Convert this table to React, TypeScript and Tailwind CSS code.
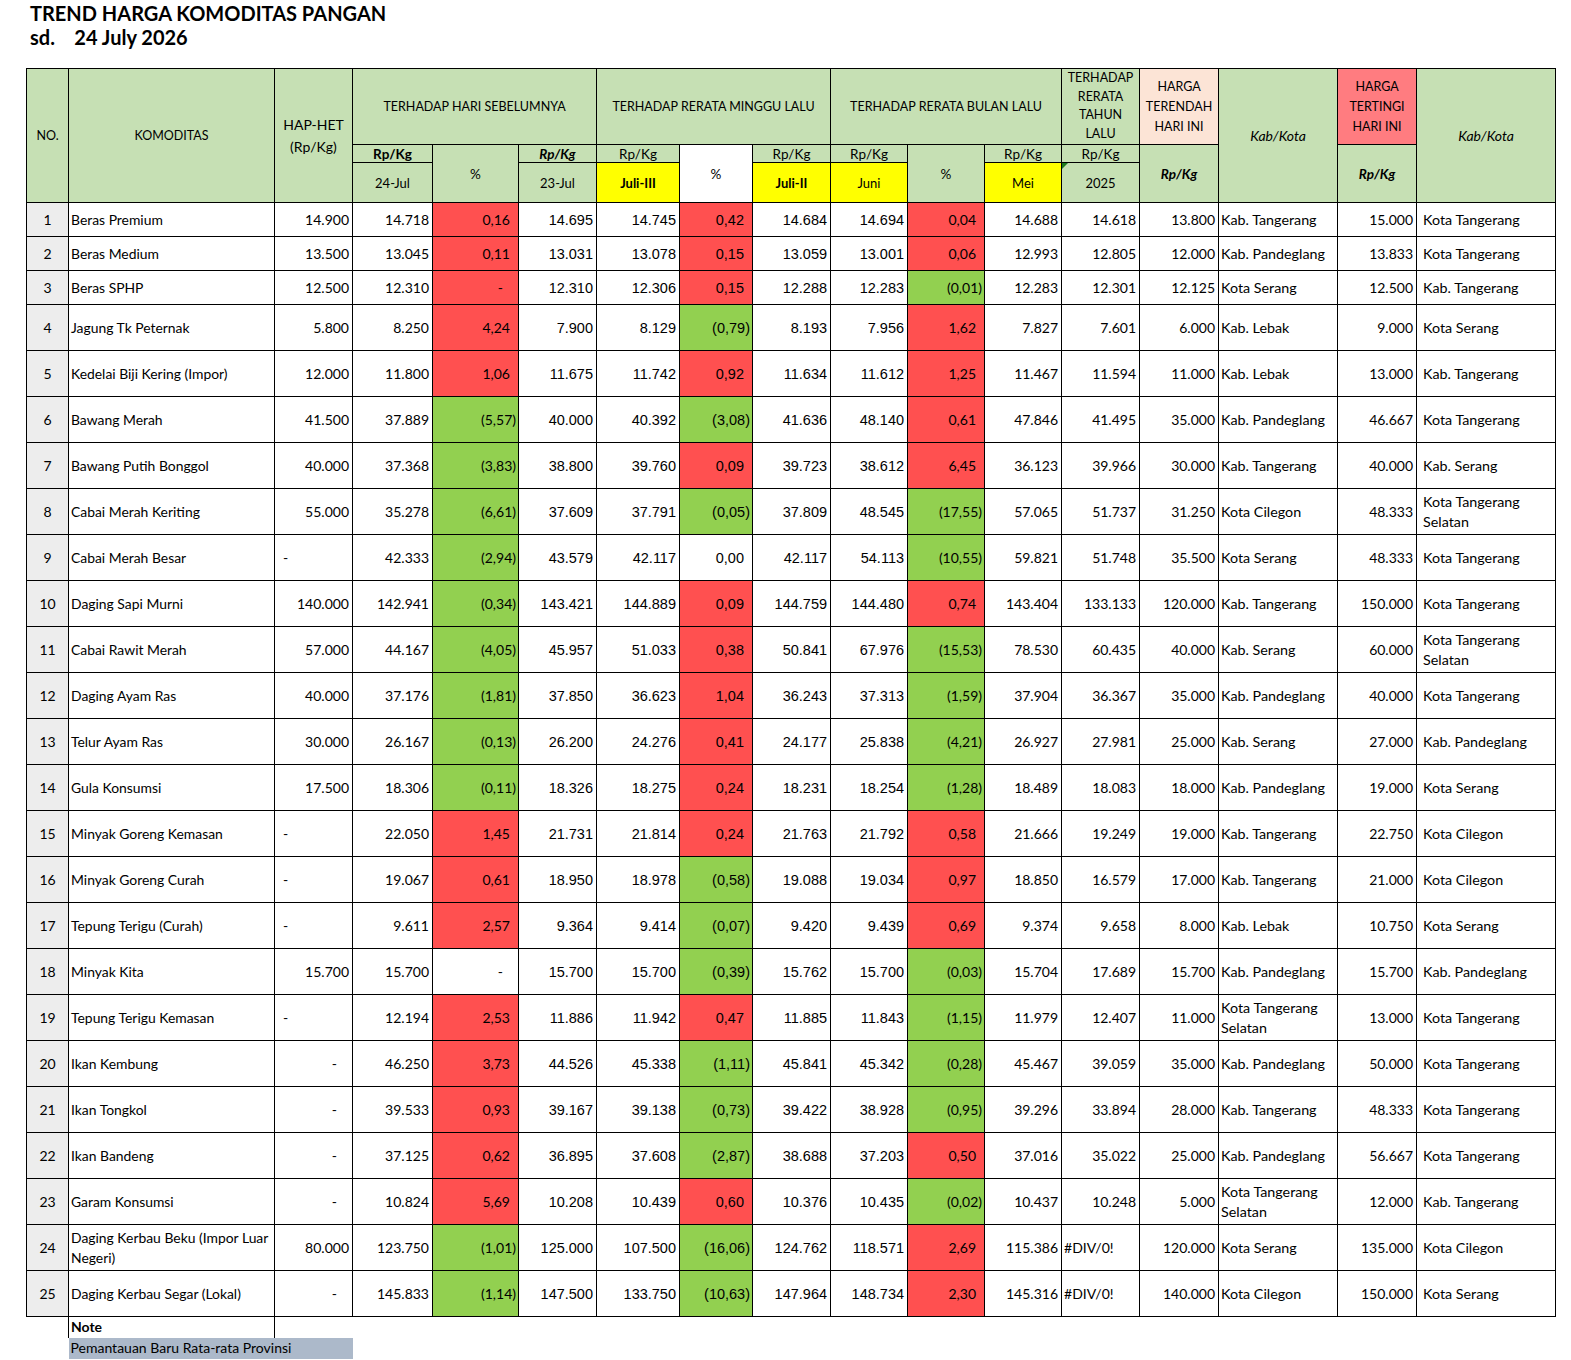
import React from 'react';

type Tone = 'r' | 'g' | 'w';

interface Row {
  no: number;
  name: string;
  hap: string;
  hapLeft?: boolean;
  d24: string;
  p1: string;
  t1: Tone;
  d23: string;
  j3: string;
  p2: string;
  t2: Tone;
  j2: string;
  juni: string;
  p3: string;
  t3: Tone;
  mei: string;
  y25: string;
  low: string;
  lowLoc: string;
  high: string;
  highLoc: string;
}

// one line per commodity: no|name|hap|24jul|%|23jul|juli3|%|juli2|juni|%|mei|2025|low|loc|high|loc
const raw = `1|Beras Premium|14.900|14.718|0,16 r|14.695|14.745|0,42 r|14.684|14.694|0,04 r|14.688|14.618|13.800|Kab. Tangerang|15.000|Kota Tangerang
2|Beras Medium|13.500|13.045|0,11 r|13.031|13.078|0,15 r|13.059|13.001|0,06 r|12.993|12.805|12.000|Kab. Pandeglang|13.833|Kota Tangerang
3|Beras SPHP|12.500|12.310|- r|12.310|12.306|0,15 r|12.288|12.283|(0,01) g|12.283|12.301|12.125|Kota Serang|12.500|Kab. Tangerang
4|Jagung Tk Peternak|5.800|8.250|4,24 r|7.900|8.129|(0,79) g|8.193|7.956|1,62 r|7.827|7.601|6.000|Kab. Lebak|9.000|Kota Serang
5|Kedelai Biji Kering (Impor)|12.000|11.800|1,06 r|11.675|11.742|0,92 r|11.634|11.612|1,25 r|11.467|11.594|11.000|Kab. Lebak|13.000|Kab. Tangerang
6|Bawang Merah|41.500|37.889|(5,57) g|40.000|40.392|(3,08) g|41.636|48.140|0,61 r|47.846|41.495|35.000|Kab. Pandeglang|46.667|Kota Tangerang
7|Bawang Putih Bonggol|40.000|37.368|(3,83) g|38.800|39.760|0,09 r|39.723|38.612|6,45 r|36.123|39.966|30.000|Kab. Tangerang|40.000|Kab. Serang
8|Cabai Merah Keriting|55.000|35.278|(6,61) g|37.609|37.791|(0,05) g|37.809|48.545|(17,55) g|57.065|51.737|31.250|Kota Cilegon|48.333|Kota Tangerang Selatan
9|Cabai Merah Besar|-L|42.333|(2,94) g|43.579|42.117|0,00 w|42.117|54.113|(10,55) g|59.821|51.748|35.500|Kota Serang|48.333|Kota Tangerang
10|Daging Sapi Murni|140.000|142.941|(0,34) g|143.421|144.889|0,09 r|144.759|144.480|0,74 r|143.404|133.133|120.000|Kab. Tangerang|150.000|Kota Tangerang
11|Cabai Rawit Merah|57.000|44.167|(4,05) g|45.957|51.033|0,38 r|50.841|67.976|(15,53) g|78.530|60.435|40.000|Kab. Serang|60.000|Kota Tangerang Selatan
12|Daging Ayam Ras|40.000|37.176|(1,81) g|37.850|36.623|1,04 r|36.243|37.313|(1,59) g|37.904|36.367|35.000|Kab. Pandeglang|40.000|Kota Tangerang
13|Telur Ayam Ras|30.000|26.167|(0,13) g|26.200|24.276|0,41 r|24.177|25.838|(4,21) g|26.927|27.981|25.000|Kab. Serang|27.000|Kab. Pandeglang
14|Gula Konsumsi|17.500|18.306|(0,11) g|18.326|18.275|0,24 r|18.231|18.254|(1,28) g|18.489|18.083|18.000|Kab. Pandeglang|19.000|Kota Serang
15|Minyak Goreng Kemasan|-L|22.050|1,45 r|21.731|21.814|0,24 r|21.763|21.792|0,58 r|21.666|19.249|19.000|Kab. Tangerang|22.750|Kota Cilegon
16|Minyak Goreng Curah|-L|19.067|0,61 r|18.950|18.978|(0,58) g|19.088|19.034|0,97 r|18.850|16.579|17.000|Kab. Tangerang|21.000|Kota Cilegon
17|Tepung Terigu (Curah)|-L|9.611|2,57 r|9.364|9.414|(0,07) g|9.420|9.439|0,69 r|9.374|9.658|8.000|Kab. Lebak|10.750|Kota Serang
18|Minyak Kita|15.700|15.700|- w|15.700|15.700|(0,39) g|15.762|15.700|(0,03) g|15.704|17.689|15.700|Kab. Pandeglang|15.700|Kab. Pandeglang
19|Tepung Terigu Kemasan|-L|12.194|2,53 r|11.886|11.942|0,47 r|11.885|11.843|(1,15) g|11.979|12.407|11.000|Kota Tangerang Selatan|13.000|Kota Tangerang
20|Ikan Kembung|-|46.250|3,73 r|44.526|45.338|(1,11) g|45.841|45.342|(0,28) g|45.467|39.059|35.000|Kab. Pandeglang|50.000|Kota Tangerang
21|Ikan Tongkol|-|39.533|0,93 r|39.167|39.138|(0,73) g|39.422|38.928|(0,95) g|39.296|33.894|28.000|Kab. Tangerang|48.333|Kota Tangerang
22|Ikan Bandeng|-|37.125|0,62 r|36.895|37.608|(2,87) g|38.688|37.203|0,50 r|37.016|35.022|25.000|Kab. Pandeglang|56.667|Kota Tangerang
23|Garam Konsumsi|-|10.824|5,69 r|10.208|10.439|0,60 r|10.376|10.435|(0,02) g|10.437|10.248|5.000|Kota Tangerang Selatan|12.000|Kab. Tangerang
24|Daging Kerbau Beku (Impor Luar Negeri)|80.000|123.750|(1,01) g|125.000|107.500|(16,06) g|124.762|118.571|2,69 r|115.386|#DIV/0!|120.000|Kota Serang|135.000|Kota Cilegon
25|Daging Kerbau Segar (Lokal)|-|145.833|(1,14) g|147.500|133.750|(10,63) g|147.964|148.734|2,30 r|145.316|#DIV/0!|140.000|Kota Cilegon|150.000|Kota Serang`;

const split = (s: string): [string, Tone] => {
  const [v, t] = s.split(' ');
  return [v, t as Tone];
};

const rows: Row[] = raw.split('\n').map((line) => {
  const c = line.split('|');
  const [p1, t1] = split(c[4]);
  const [p2, t2] = split(c[7]);
  const [p3, t3] = split(c[10]);
  return {
    no: Number(c[0]),
    name: c[1],
    hap: c[2] === '-L' ? '-' : c[2],
    hapLeft: c[2] === '-L',
    d24: c[3],
    p1,
    t1,
    d23: c[5],
    j3: c[6],
    p2,
    t2,
    j2: c[8],
    juni: c[9],
    p3,
    t3,
    mei: c[11],
    y25: c[12],
    low: c[13],
    lowLoc: c[14],
    high: c[15],
    highLoc: c[16],
  };
});

const widths = [42, 206, 78, 80, 86, 78, 83, 73, 78, 77, 77, 77, 78, 79, 119, 79, 139];

const cell = 'border border-black';
const hdr = 'border border-black bg-[#c6e0b4] text-center align-middle';
const calibri = "font-['Lato','Open_Sans',sans-serif]";
const arial = "font-['Liberation_Sans',Arial,sans-serif] text-[14.5px]";

function Pct({ v, tone, arialFont }: { v: string; tone: Tone; arialFont?: boolean }) {
  const bg =
    tone === 'r' ? 'bg-[#ff5050]' : tone === 'g' ? 'bg-[#92d050]' : 'bg-white';
  const pad = v === '-' ? 'pr-[15px]' : v.startsWith('(') ? 'pr-[2px]' : 'pr-[8px]';
  return (
    <td className={`${cell} ${bg} ${pad} text-right ${arialFont ? arial : ''}`}>{v}</td>
  );
}

function Num({ v, arialFont }: { v: string; arialFont?: boolean }) {
  return (
    <td className={`${cell} pr-[3px] text-right ${arialFont ? arial : ''}`}>{v}</td>
  );
}

export default function App() {
  return (
    <div className={`min-h-[1360px] bg-white text-black ${calibri}`}>
      <div className="pl-[30px] pt-[1px] text-[20px] font-bold leading-[24px]">
        <div>TREND HARGA KOMODITAS PANGAN</div>
        <div>sd.&nbsp;&nbsp;&nbsp; 24 July 2026</div>
      </div>

      <table className="ml-[26px] mt-[19px] w-[1529px] table-fixed border-collapse text-[14px] leading-[20px]">
        <colgroup>
          {widths.map((w, i) => (
            <col key={i} style={{ width: w }} />
          ))}
        </colgroup>
        <thead className="text-[12.5px]">
          <tr className="h-[76px]">
            <th rowSpan={3} className={`${hdr} font-normal`}>
              NO.
            </th>
            <th rowSpan={3} className={`${hdr} font-normal`}>
              KOMODITAS
            </th>
            <th rowSpan={3} className={`${hdr} font-normal text-[14px] leading-[22px]`}>
              HAP-HET
              <br />
              (Rp/Kg)
            </th>
            <th colSpan={3} className={`${hdr} font-normal`}>
              TERHADAP HARI SEBELUMNYA
            </th>
            <th colSpan={3} className={`${hdr} font-normal`}>
              TERHADAP RERATA MINGGU LALU
            </th>
            <th colSpan={3} className={`${hdr} font-normal`}>
              TERHADAP RERATA BULAN LALU
            </th>
            <th className={`${hdr} font-normal leading-[18.5px] align-top pt-0`}>
              TERHADAP
              <br />
              RERATA
              <br />
              TAHUN
              <br />
              LALU
            </th>
            <th className={`${hdr} !bg-[#fce4d6] font-normal leading-[20px]`}>
              HARGA
              <br />
              TERENDAH
              <br />
              HARI INI
            </th>
            <th rowSpan={3} className={`${hdr} font-normal italic text-[14px]`}>
              Kab/Kota
            </th>
            <th className={`${hdr} !bg-[#ff7c80] font-normal leading-[20px]`}>
              HARGA
              <br />
              TERTINGI
              <br />
              HARI INI
            </th>
            <th rowSpan={3} className={`${hdr} font-normal italic text-[14px]`}>
              Kab/Kota
            </th>
          </tr>
          <tr className="h-[18px] text-[13.5px] leading-[16px]">
            <th className={`${hdr} font-bold`}>Rp/Kg</th>
            <th rowSpan={2} className={`${hdr} font-normal`}>
              %
            </th>
            <th className={`${hdr} font-bold italic`}>Rp/Kg</th>
            <th className={`${hdr} font-normal`}>Rp/Kg</th>
            <th rowSpan={2} className={`${hdr} !bg-white font-normal`}>
              %
            </th>
            <th className={`${hdr} font-normal`}>Rp/Kg</th>
            <th className={`${hdr} font-normal`}>Rp/Kg</th>
            <th rowSpan={2} className={`${hdr} font-normal`}>
              %
            </th>
            <th className={`${hdr} font-normal`}>Rp/Kg</th>
            <th className={`${hdr} font-normal`}>Rp/Kg</th>
            <th rowSpan={2} className={`${hdr} font-bold italic`}>
              Rp/Kg
            </th>
            <th rowSpan={2} className={`${hdr} font-bold italic`}>
              Rp/Kg
            </th>
          </tr>
          <tr className="h-[40px] text-[13px]">
            <th className={`${hdr} font-normal`}>24-Jul</th>
            <th className={`${hdr} font-normal`}>23-Jul</th>
            <th className={`${hdr} !bg-[#ffff00] font-bold`}>Juli-III</th>
            <th className={`${hdr} !bg-[#ffff00] font-bold`}>Juli-II</th>
            <th className={`${hdr} !bg-[#ffff00] font-normal`}>Juni</th>
            <th className={`${hdr} !bg-[#ffff00] font-normal`}>Mei</th>
            <th className={`${hdr} relative font-normal`}>
              <span className="absolute left-0 top-0 h-0 w-0 border-r-[6px] border-t-[6px] border-r-transparent border-t-[#1e7b1e]" />
              2025
            </th>
          </tr>
        </thead>
        <tbody>
          {rows.map((r) => (
            <tr key={r.no} className={r.no <= 3 ? 'h-[34px]' : 'h-[46px]'}>
              <td className={`${cell} bg-[#ededed] text-center`}>{r.no}</td>
              <td className={`${cell} pl-[2px] pr-0 text-[13.9px]`}>{r.name}</td>
              {r.hap === '-' ? (
                <td className={`${cell} ${r.hapLeft ? 'pl-[8px] text-left' : 'pr-[15px] text-right'}`}>-</td>
              ) : (
                <Num v={r.hap} />
              )}
              <Num v={r.d24} />
              <Pct v={r.p1} tone={r.t1} />
              <Num v={r.d23} arialFont />
              <Num v={r.j3} arialFont />
              <Pct v={r.p2} tone={r.t2} arialFont />
              <Num v={r.j2} arialFont />
              <Num v={r.juni} arialFont />
              <Pct v={r.p3} tone={r.t3} />
              <Num v={r.mei} />
              {r.y25.startsWith('#') ? (
                <td className={`${cell} pl-[2px] text-left`}>{r.y25}</td>
              ) : (
                <Num v={r.y25} />
              )}
              <Num v={r.low} />
              <td className={`${cell} pl-[2px] pr-[2px] text-[14.3px]`}>{r.lowLoc}</td>
              <Num v={r.high} />
              <td className={`${cell} pl-[6px] pr-[2px] text-[14.3px]`}>{r.highLoc}</td>
            </tr>
          ))}
          <tr className="h-[21px] text-[14px]">
            <td />
            <td className="border-x border-black pl-[2px] font-bold">Note</td>
            <td colSpan={15} />
          </tr>
          <tr className="h-[21px] text-[14px]">
            <td />
            <td colSpan={2} className="bg-[#acb9ca] pl-[2px]">
              Pemantauan Baru Rata-rata Provinsi
            </td>
            <td colSpan={14} />
          </tr>
        </tbody>
      </table>
    </div>
  );
}
